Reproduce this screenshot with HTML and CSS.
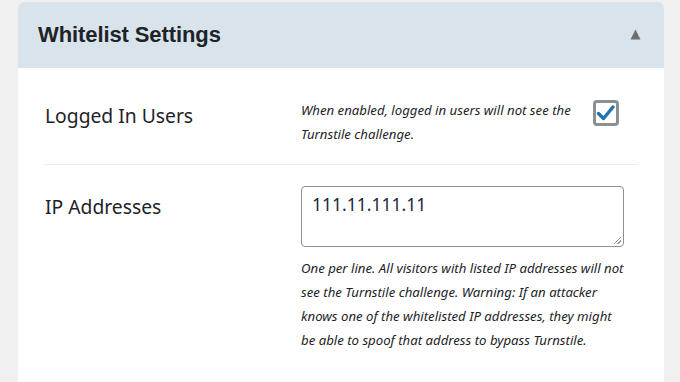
FILE: index.html
```html
<!DOCTYPE html>
<html>
<head>
<meta charset="utf-8">
<link rel="stylesheet" href="styles.css">
</head>
<body>
<div class="card">
  <div class="card-header">
    <h2 class="title">Whitelist Settings</h2>
    <svg class="toggle" width="11" height="11" viewBox="0 0 11 11"><polygon points="5.5,0.5 10.5,10.5 0.5,10.5" fill="#6e6e6e"/></svg>
  </div>
  <div class="card-body">
    <div class="row row-first">
      <div class="label">Logged In Users</div>
      <div class="field field-check">
        <p class="desc desc-check">When enabled, logged in users will not see the Turnstile challenge.</p>
        <span class="checkbox">
          <svg width="20" height="18" viewBox="0 0 20 18"><path d="M2.5 9.5 L7.5 14.5 L17 3" fill="none" stroke="#2271b1" stroke-width="3.4" stroke-linecap="round" stroke-linejoin="round"/></svg>
        </span>
      </div>
    </div>
    <div class="row row-second">
      <div class="label label-ip">IP Addresses</div>
      <div class="field">
        <div class="textarea">111.11.111.11<span class="grip"></span></div>
        <p class="desc help">One per line. All visitors with listed IP addresses will not see the Turnstile challenge. Warning: If an attacker knows one of the whitelisted IP addresses, they might be able to spoof that address to bypass Turnstile.</p>
      </div>
    </div>
  </div>
</div>
</body>
</html>
```
FILE: styles.css
```css
html, body { margin: 0; padding: 0; }
body {
  background: #f0f0f1;
  width: 680px;
  height: 382px;
  overflow: hidden;
  font-family: "Noto Sans", "Open Sans", sans-serif;
  color: #1d2327;
}
.card {
  margin: 2px 0 0 18px;
  width: 646px;
  background: #fff;
  border-radius: 6px 6px 0 0;
  height: 400px;
}
.card-header {
  height: 66px;
  background: #d9e3ec;
  border-radius: 6px 6px 0 0;
  display: flex;
  align-items: center;
  justify-content: space-between;
  padding: 0 23px 0 20px;
}
.title {
  margin: 0;
  font-family: "Liberation Sans", Arial, sans-serif;
  font-weight: bold;
  font-size: 22px;
  color: #1d2327;
  letter-spacing: -0.1px;
}
.toggle {
  margin-top: -1px;
}
.card-body {
  padding: 0 26px;
}
.row {
  display: flex;
}
.row-first {
  padding: 30px 0 18px;
  border-bottom: 1px solid #ebebeb;
}
.row-second {
  padding-top: 21px;
}
.label {
  width: 256px;
  flex: none;
  font-size: 19.3px;
  line-height: 24px;
  margin-top: 6px;
  padding-left: 1px;
  color: #1d2327;
}
.label-ip { margin-top: 9px; }
.field {
  flex: 1;
}
.field-check {
  display: flex;
  align-items: flex-start;
}
.desc {
  margin: 0;
  font-style: italic;
  font-size: 13.2px;
  line-height: 24px;
  color: #1d2327;
}
.desc-check {
  width: 292px;
}
.checkbox {
  margin: 2px 0 0 0;
  width: 20px;
  height: 20px;
  border: 3px solid #8c8f94;
  border-radius: 4px;
  display: flex;
  align-items: center;
  justify-content: center;
}
.textarea {
  position: relative;
  width: 311px;
  height: 59px;
  border: 1px solid #8c8f94;
  border-radius: 4px;
  padding: 0 0 0 10px;
  font-size: 17.5px;
  line-height: 34px;
  color: #1d2a3a;
}
.grip {
  position: absolute;
  right: 2px;
  bottom: 2px;
  width: 7px;
  height: 7px;
  background: linear-gradient(135deg, transparent 45%, #999 45%, #999 55%, transparent 55%, transparent 70%, #999 70%, #999 80%, transparent 80%);
}
.help {
  margin-top: 9px;
  width: 324px;
}
```
